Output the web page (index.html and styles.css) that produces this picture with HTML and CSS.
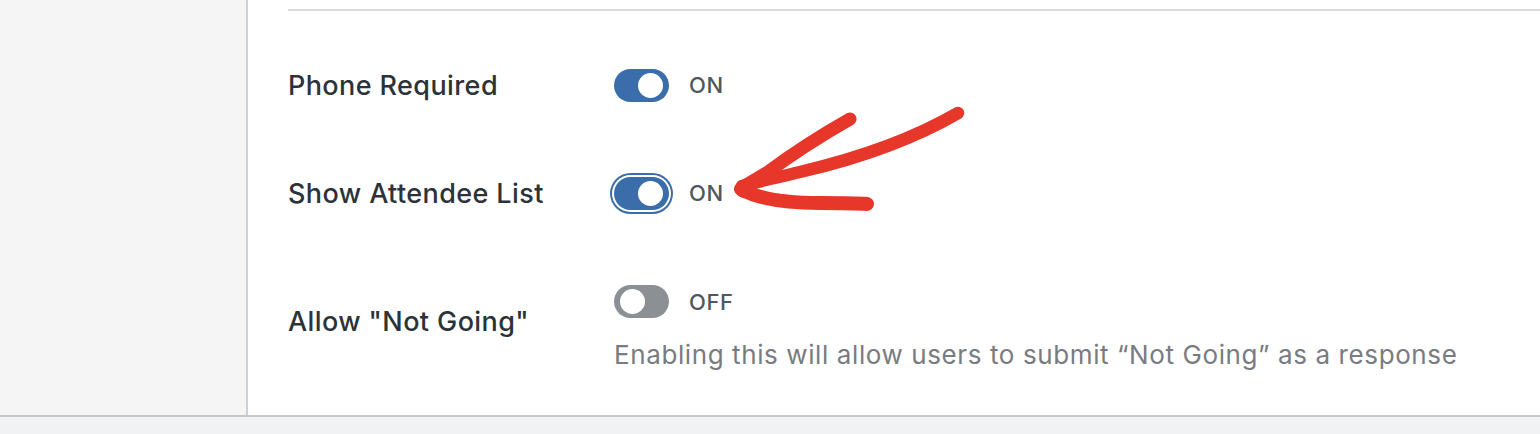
FILE: index.html
```html
<!DOCTYPE html>
<html lang="en">
<head>
<meta charset="utf-8">
<title>Settings</title>
<link rel="stylesheet" href="styles.css">
</head>
<body>
<div class="page">
  <div class="frame">
    <aside class="sidebar"></aside>
    <main class="content">
      <div class="rule"></div>
      <div class="row">
        <div class="label">Phone Required</div>
        <div class="control">
          <span class="toggle on"><span class="knob"></span></span>
          <span class="state">ON</span>
        </div>
      </div>
      <div class="row">
        <div class="label">Show Attendee List</div>
        <div class="control">
          <span class="toggle on focus"><span class="knob"></span></span>
          <span class="state">ON</span>
        </div>
      </div>
      <div class="row row-desc">
        <div class="label label-desc">Allow "Not Going"</div>
        <div class="control-group">
          <div class="control">
            <span class="toggle off"><span class="knob"></span></span>
            <span class="state">OFF</span>
          </div>
          <p class="desc">Enabling this will allow users to submit “Not Going” as a response</p>
        </div>
      </div>
    </main>
  </div>
  <div class="footer"></div>
  <svg class="arrow" width="1540" height="434" viewBox="0 0 1540 434" aria-hidden="true">
    <g fill="none" stroke="#e7362a" stroke-linecap="round" stroke-linejoin="round">
      <path d="M958,113 C915,138 860,158 800,172 C780,177 760,181 742,186" stroke-width="12.5"/>
      <path d="M850,119 C820,136 795,152 768,172 L746,185" stroke-width="13"/>
      <path d="M741,189 C760,200 790,203 820,203 C840,203 855,203 867,204" stroke-width="14"/>
    </g>
    <circle cx="744" cy="189" r="9" fill="#e7362a"/>
  </svg>
</div>
</body>
</html>
```
FILE: styles.css
```css
html, body {
  margin: 0;
  padding: 0;
}
body {
  width: 1540px;
  height: 434px;
  overflow: hidden;
  background: #f1f2f4;
  font-family: Inter, "Noto Sans", "Liberation Sans", sans-serif;
}
.page {
  position: relative;
  width: 1540px;
  height: 434px;
}
.frame {
  display: flex;
  height: 415px;
  border-bottom: 2px solid #c6c7ca;
  background: #fff;
}
.sidebar {
  width: 246px;
  flex: none;
  background: #f5f5f5;
  border-right: 2px solid #cdd0d4;
}
.content {
  flex: 1;
  padding-left: 40px;
  padding-top: 9px;
}
.rule {
  height: 2px;
  background: #dcdcde;
  margin-bottom: 20px;
}
.row {
  display: flex;
  align-items: center;
  height: 108px;
}
.label {
  width: 326px;
  flex: none;
  font-size: 27px;
  letter-spacing: 0.4px;
  font-weight: 500;
  color: #2c3338;
}
.control {
  display: flex;
  align-items: center;
  gap: 20px;
}
.toggle {
  position: relative;
  box-sizing: border-box;
  width: 55px;
  height: 33px;
  border-radius: 17px;
  display: flex;
  align-items: center;
  padding: 0 6px;
}
.toggle.on {
  background: #3a6da9;
  justify-content: flex-end;
}
.toggle.off {
  background: #8c8f94;
  justify-content: flex-start;
}
.toggle.focus {
  box-shadow: 0 0 0 2px #fff, 0 0 0 4px #3a6da9;
}
.knob {
  width: 25px;
  height: 25px;
  border-radius: 50%;
  background: #fff;
}
.state {
  font-size: 22px;
  letter-spacing: 0.6px;
  font-weight: 500;
  color: #50575e;
}
.row-desc {
  align-items: flex-start;
  padding-top: 38px;
  height: auto;
}
.label-desc {
  padding-top: 20px;
}
.desc {
  margin: 21px 0 0;
  font-size: 26px;
  letter-spacing: 0.6px;
  color: #787c82;
}
.arrow {
  position: absolute;
  left: 0;
  top: 0;
  pointer-events: none;
}
```
